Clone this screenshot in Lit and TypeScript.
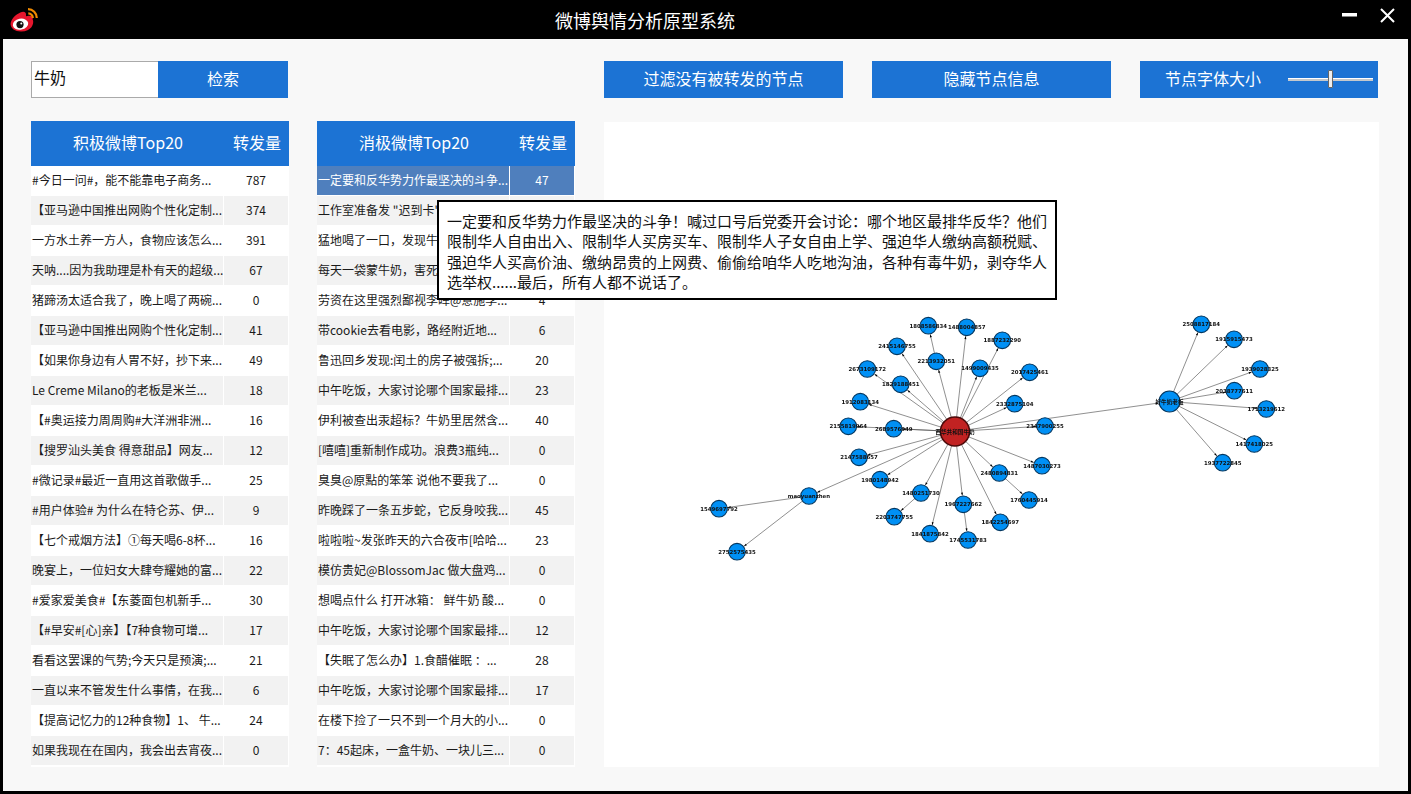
import { LitElement, html, css, svg } from "lit";
import { customElement, state } from "lit/decorators.js";

type Row = [string, string];

const POSITIVE: Row[] = [
  ["#今日一问#，能不能靠电子商务...", "787"],
  ["【亚马逊中国推出网购个性化定制...", "374"],
  ["一方水土养一方人，食物应该怎么...", "391"],
  ["天呐....因为我助理是朴有天的超级...", "67"],
  ["猪蹄汤太适合我了，晚上喝了两碗...", "0"],
  ["【亚马逊中国推出网购个性化定制...", "41"],
  ["【如果你身边有人胃不好，抄下来...", "49"],
  ["Le Creme Milano的老板是米兰...", "18"],
  ["【#奥运接力周周购#大洋洲非洲...", "16"],
  ["【搜罗汕头美食 得意甜品】网友...", "12"],
  ["#微记录#最近一直用这首歌做手...", "25"],
  ["#用户体验# 为什么在特仑苏、伊...", "9"],
  ["【七个戒烟方法】①每天喝6-8杯...", "16"],
  ["晚宴上，一位妇女大肆夸耀她的富...", "22"],
  ["#爱家爱美食#【东菱面包机新手...", "30"],
  ["【#早安#[心]亲】【7种食物可增...", "17"],
  ["看看这罢课的气势;今天只是预演;...", "21"],
  ["一直以来不管发生什么事情，在我...", "6"],
  ["【提高记忆力的12种食物】1、 牛...", "24"],
  ["如果我现在在国内，我会出去宵夜...", "0"],
];

const NEGATIVE: Row[] = [
  ["一定要和反华势力作最坚决的斗争...", "47"],
  ["工作室准备发 \"迟到卡\"", ""],
  ["猛地喝了一口，发现牛", ""],
  ["每天一袋蒙牛奶，害死", ""],
  ["劳资在这里强烈鄙视李晖@意施李...", "4"],
  ["带cookie去看电影，路经附近地...", "6"],
  ["鲁迅回乡发现:闰土的房子被强拆;...", "20"],
  ["中午吃饭，大家讨论哪个国家最排...", "23"],
  ["伊利被查出汞超标？牛奶里居然含...", "40"],
  ["[嘻嘻]重新制作成功。浪费3瓶纯...", "0"],
  ["臭臭@原點的笨笨 说他不要我了...", "0"],
  ["昨晚踩了一条五步蛇，它反身咬我...", "45"],
  ["啦啦啦~发张昨天的六合夜市[哈哈...", "23"],
  ["模仿贵妃@BlossomJac 做大盘鸡...", "0"],
  ["想喝点什么 打开冰箱： 鲜牛奶 酸...", "0"],
  ["中午吃饭，大家讨论哪个国家最排...", "12"],
  ["【失眠了怎么办】1.食醋催眠 ：...", "28"],
  ["中午吃饭，大家讨论哪个国家最排...", "17"],
  ["在楼下捡了一只不到一个月大的小...", "0"],
  ["7：45起床，一盒牛奶、一块儿三...", "0"],
];

const TOOLTIP =
  "一定要和反华势力作最坚决的斗争！喊过口号后党委开会讨论：哪个地区最排华反华？他们限制华人自由出入、限制华人买房买车、限制华人子女自由上学、强迫华人缴纳高额税赋、强迫华人买高价油、缴纳昂贵的上网费、偷偷给咱华人吃地沟油，各种有毒牛奶，剥夺华人选举权......最后，所有人都不说话了。";

type GraphNode = { id: string; x: number; y: number; r?: number; fill?: string };

const CENTER: GraphNode = { id: "西华共和国牛奶", x: 955, y: 431.5, r: 14.5, fill: "#c12222" };
const HUB: GraphNode = { id: "好牛奶老板", x: 1169.5, y: 401.5, r: 10.5 };
const MAO: GraphNode = { id: "maoyuanzhen", x: 809, y: 496 };

const n = (id: string, x: number, y: number): GraphNode => ({ id, x, y });

const INNER_1 = n("2213932051", 936.3, 361.3);
const INNER_2 = n("2480894831", 999.3, 473);
const INNER_3 = n("1480251730", 921, 493);
const INNER_4 = n("1967227662", 963.3, 504.3);

const FROM_CENTER = [
  INNER_1,
  INNER_2,
  INNER_3,
  INNER_4,
  n("1488004857", 966.7, 327.3),
  n("1887232290", 1002.3, 340.3),
  n("1499009435", 980, 368.3),
  n("2017425461", 1029.7, 372.3),
  n("2415146755", 897, 346.3),
  n("2673109172", 867.3, 369),
  n("1829188451", 900.7, 384.3),
  n("1912083134", 860.3, 401.7),
  n("2332875104", 1014.7, 403.7),
  n("2155819964", 848.3, 426.3),
  n("2689576949", 893.7, 428.7),
  n("2347900255", 1045, 426),
  n("2147588657", 859, 457.3),
  n("1487030273", 1042, 465.7),
  n("1980148942", 880, 479.7),
  n("1842254697", 1000.3, 522.3),
  n("1841875842", 930, 533.7),
];

const FROM_HUB = [
  n("2508817184", 1201.3, 324.3),
  n("1915915473", 1234, 339.3),
  n("1939028325", 1260, 369),
  n("2038777611", 1234.3, 390.7),
  n("1713219612", 1266.3, 409),
  n("1417418025", 1254.3, 444),
  n("1937722845", 1222.7, 462.7),
];

const FROM_MAO = [n("1549697792", 719, 508.7), n("2752575435", 737, 551.7)];

const OUTER_1 = n("1808586834", 928.3, 325.7);
const OUTER_2 = n("1760445914", 1029, 500);
const OUTER_3 = n("2203747755", 894.3, 516.7);
const OUTER_4 = n("1745531783", 968, 540);

const EDGES: [GraphNode, GraphNode][] = [
  ...FROM_CENTER.map((t): [GraphNode, GraphNode] => [CENTER, t]),
  ...FROM_HUB.map((t): [GraphNode, GraphNode] => [HUB, t]),
  ...FROM_MAO.map((t): [GraphNode, GraphNode] => [MAO, t]),
  [CENTER, HUB],
  [CENTER, MAO],
  [INNER_1, OUTER_1],
  [INNER_2, OUTER_2],
  [INNER_3, OUTER_3],
  [INNER_4, OUTER_4],
];

const NODES = [
  ...FROM_CENTER,
  ...FROM_HUB,
  ...FROM_MAO,
  OUTER_1,
  OUTER_2,
  OUTER_3,
  OUTER_4,
  MAO,
  HUB,
  CENTER,
];

@customElement("sentiment-graph")
export class SentimentGraph extends LitElement {
  static styles = css`
    :host {
      display: block;
      height: 100%;
    }
    svg {
      display: block;
      width: 100%;
      height: 100%;
      filter: blur(0.4px);
    }
    .edge {
      stroke: #444;
      stroke-width: 0.6;
    }
    .arrow {
      fill: #000;
    }
    .node {
      stroke: #04375f;
      stroke-width: 1.1;
    }
    .center {
      stroke: #4c0a0a;
      stroke-width: 1.6;
    }
    text {
      font-family: "DejaVu Sans", sans-serif;
      font-size: 5.4px;
      font-weight: 700;
      fill: #111;
      text-anchor: middle;
    }
    .cjk {
      font-family: "Noto Sans CJK SC", sans-serif;
      font-size: 5.6px;
    }
  `;

  private _edge(a: GraphNode, b: GraphNode) {
    const dx = b.x - a.x;
    const dy = b.y - a.y;
    const len = Math.hypot(dx, dy);
    const ux = dx / len;
    const uy = dy / len;
    const gap = (b.r ?? 8.3) + 0.5;
    const ex = b.x - ux * gap;
    const ey = b.y - uy * gap;
    const bx = ex - ux * 3;
    const by = ey - uy * 3;
    return svg`
      <line class="edge" x1=${a.x} y1=${a.y} x2=${ex} y2=${ey}></line>
      <polygon
        class="arrow"
        points="${ex},${ey} ${bx - uy * 1},${by + ux * 1} ${bx + uy * 1},${by - ux * 1}"
      ></polygon>
    `;
  }

  render() {
    return html`
      <svg viewBox="604 122 775 645">
        ${EDGES.map(([a, b]) => this._edge(a, b))}
        ${NODES.map(
          (d) => svg`
            <circle
              class=${d === CENTER ? "center" : "node"}
              cx=${d.x}
              cy=${d.y}
              r=${d.r ?? 8.3}
              fill=${d.fill ?? "#0090f5"}
            ></circle>
          `,
        )}
        ${NODES.map(
          (d) => svg`
            <text
              class=${d === CENTER || d === HUB ? "cjk" : ""}
              x=${d.x}
              y=${d.y + 2}
            >${d.id}</text>
          `,
        )}
      </svg>
    `;
  }
}

@customElement("app-root")
export class AppRoot extends LitElement {
  @state()
  query = "牛奶";

  @state()
  fontScale = 47;

  static styles = css`
    :host {
      display: block;
      position: relative;
      width: 1411px;
      height: 794px;
      background: #000;
      overflow: hidden;
      font-family: "Noto Sans CJK SC", "Liberation Sans", sans-serif;
      color: #1a1a1a;
    }

    .titlebar {
      display: flex;
      height: 39px;
      padding-left: 10px;
      box-sizing: border-box;
      color: #fff;
    }

    .logo {
      width: 28px;
      height: 24px;
      margin-top: 8px;
    }

    .title {
      margin-left: 517px;
      font-size: 18px;
      line-height: 40px;
    }

    .win-controls {
      display: flex;
      margin-left: auto;
      margin-right: 16px;
      gap: 23px;
      padding-top: 8px;
    }

    .win-controls svg {
      display: block;
      width: 15px;
      height: 15px;
    }

    .main {
      display: flex;
      gap: 29px;
      height: 752px;
      margin: 0 3px;
      padding: 22px 0 0 28px;
      box-sizing: border-box;
      background: #f8f8f8;
    }

    .left {
      display: flex;
      flex-direction: column;
      gap: 23px;
      width: 544px;
    }

    .search {
      display: flex;
      width: 257px;
      height: 37px;
    }

    .search input {
      width: 127px;
      height: 37px;
      box-sizing: border-box;
      padding: 0 1px 5px 2px;
      border: 1px solid #aaa;
      border-right: none;
      background: #fff;
      outline: none;
      font: inherit;
      font-size: 16px;
      color: #111;
    }

    .btn {
      display: flex;
      align-items: center;
      justify-content: center;
      height: 37px;
      padding-bottom: 4px;
      box-sizing: border-box;
      background: #1c73d4;
      color: #fff;
      font-size: 16px;
    }

    .search .btn {
      width: 130px;
    }

    .tables {
      display: flex;
      gap: 28px;
    }

    .table {
      width: 258px;
      height: 646px;
      background: #fff;
    }

    .head,
    .row {
      display: grid;
      grid-template-columns: 192px 64px;
      column-gap: 1px;
    }

    .head {
      grid-template-columns: 194px 64px;
      column-gap: 0;
      height: 45px;
      padding-bottom: 4px;
      box-sizing: border-box;
      align-items: center;
      text-align: center;
      background: #1c73d4;
      color: #fff;
      font-size: 16px;
    }

    .row {
      height: 30px;
      padding-bottom: 1px;
      box-sizing: border-box;
      font-size: 12px;
      line-height: 28px;
    }

    .row > div {
      white-space: nowrap;
      overflow: hidden;
    }

    .row .text {
      padding-left: 1px;
    }

    .row .count {
      text-align: center;
    }

    .row:nth-child(even) > div {
      background: #f2f2f2;
    }

    .row.selected > div {
      background: #4f7fbd;
      color: #fff;
    }

    .right {
      display: flex;
      flex-direction: column;
      gap: 24px;
      width: 775px;
    }

    .toolbar {
      display: flex;
      gap: 29px;
    }

    .toolbar .btn {
      width: 239px;
    }

    .toolbar .btn.with-slider {
      width: 238px;
      justify-content: flex-start;
      padding-left: 25px;
      gap: 27px;
    }

    .slider {
      position: relative;
      width: 85px;
      height: 3px;
      margin-top: 4px;
      background: linear-gradient(#fff 50%, #c4c8cc 50%);
    }

    .thumb {
      position: absolute;
      top: -8px;
      width: 5px;
      height: 18px;
      box-sizing: border-box;
      border: 1px solid #666;
      border-radius: 1px;
      background: #eee;
    }

    .graph {
      height: 645px;
      background: #fff;
    }

    .tooltip {
      position: absolute;
      left: 437px;
      top: 200px;
      width: 620px;
      height: 100px;
      box-sizing: border-box;
      padding: 9px 8px 0;
      border: 2px solid #000;
      background: #fff;
      font-size: 15px;
      line-height: 20.4px;
      color: #111;
    }
  `;

  private _table(title: string, rows: Row[], selected = -1) {
    return html`
      <div class="table">
        <div class="head">
          <div>${title}</div>
          <div>转发量</div>
        </div>
        <div>
          ${rows.map(
            ([text, count], i) => html`
              <div class="row ${i === selected ? "selected" : ""}">
                <div class="text">${text}</div>
                <div class="count">${count}</div>
              </div>
            `,
          )}
        </div>
      </div>
    `;
  }

  render() {
    return html`
      <div class="titlebar">
        <svg class="logo" viewBox="0 0 28 24">
          <path
            fill="#e6162d"
            d="M.6 16C.6 11.5 5.6 6.4 10.3 4.4c3.6-1.500 6.200-.4 5.700 2.800-.2 1.200.5 1.200 1.500.9 3-1 5.300.1 5.300 2.400 0 .7-.3 1.200.2 1.700 1 3.400-1.200 11.300-12 11.300C5 23.500.6 20.500.6 16Z"
          ></path>
          <ellipse cx="10.500" cy="16.200" rx="7.800" ry="5.500" fill="#fff" transform="rotate(-10 10.500 16.200)"></ellipse>
          <circle cx="10" cy="16.600" r="3.600" fill="#111"></circle>
          <circle cx="11.300" cy="15.400" r="1" fill="#fff"></circle>
          <path d="M18 1.200A8.800 8.800 0 0 1 26.800 10" fill="none" stroke="#f08a00" stroke-width="2.200"></path>
          <path d="M18.300 5.300A4.600 4.600 0 0 1 22.800 10" fill="none" stroke="#f08a00" stroke-width="2.200"></path>
        </svg>
        <div class="title">微博舆情分析原型系统</div>
        <div class="win-controls">
          <svg viewBox="0 0 15 15"><rect x="0" y="5" width="15" height="3.500" fill="#fff"></rect></svg>
          <svg viewBox="0 0 15 15"><path d="M1 1 14 14M14 1 1 14" stroke="#fff" stroke-width="2" fill="none"></path></svg>
        </div>
      </div>
      <div class="main">
        <div class="left">
          <div class="search">
            <input .value=${this.query} />
            <div class="btn">检索</div>
          </div>
          <div class="tables">
            ${this._table("积极微博Top20", POSITIVE)}
            ${this._table("消极微博Top20", NEGATIVE, 0)}
          </div>
        </div>
        <div class="right">
          <div class="toolbar">
            <div class="btn">过滤没有被转发的节点</div>
            <div class="btn">隐藏节点信息</div>
            <div class="btn with-slider">
              节点字体大小
              <div class="slider">
                <div class="thumb" style="left: ${this.fontScale}%"></div>
              </div>
            </div>
          </div>
          <div class="graph"><sentiment-graph></sentiment-graph></div>
        </div>
      </div>
      <div class="tooltip">${TOOLTIP}</div>
    `;
  }
}
